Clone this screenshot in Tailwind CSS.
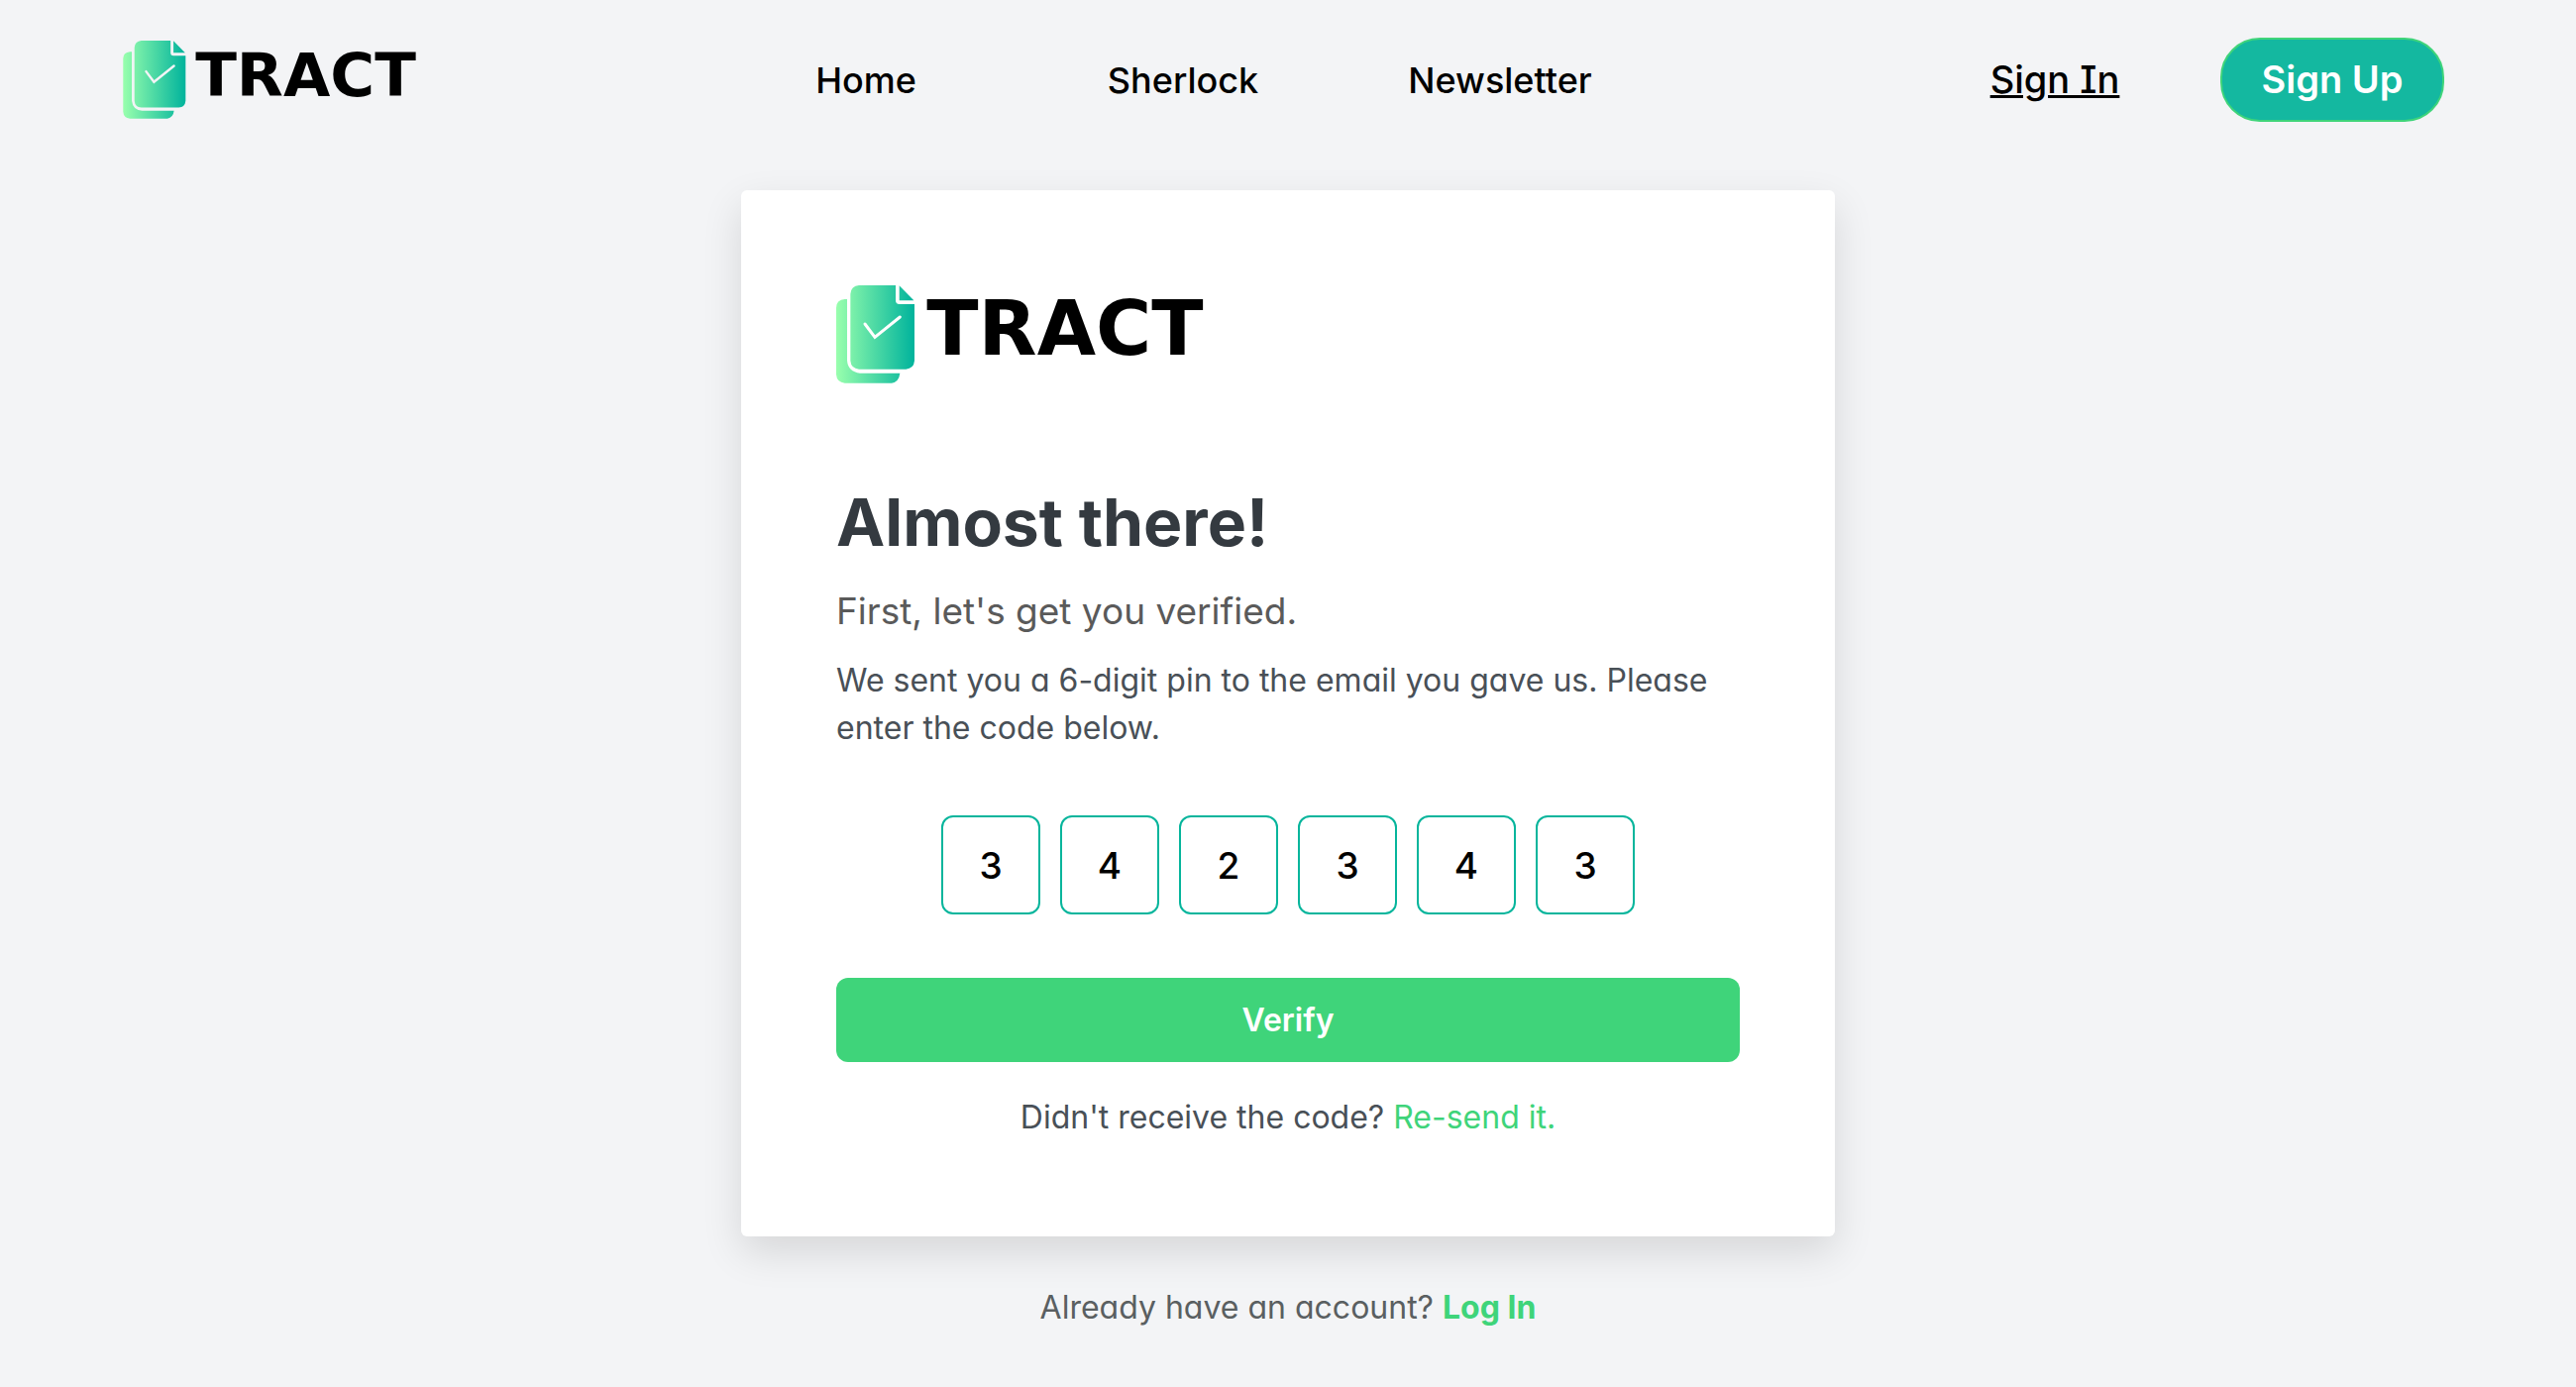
<!DOCTYPE html>
<html lang="en">
<head>
<meta charset="utf-8">
<meta name="viewport" content="width=device-width, initial-scale=1">
<title>Tract – Verify your email</title>
<script src="https://cdn.jsdelivr.net/npm/@tailwindcss/browser@4"></script>
</head>
<body class="min-h-screen bg-[#f3f4f6] font-['Inter',sans-serif] text-[32px] leading-[48px] [font-feature-settings:'cv11']">
  <header class="flex items-center justify-between pt-[38px] pr-[106px] pl-[124px] text-4xl font-medium text-black">
    <a href="#" aria-label="Tract" class="w-[330px]">
      <svg class="h-[79px] w-[299px]" viewBox="0 0 1122 297">
        <defs>
          <linearGradient id="leaf" gradientUnits="userSpaceOnUse" x1="0" y1="0" x2="237" y2="0">
            <stop offset="0" stop-color="#99ffad"/><stop offset="1" stop-color="#00b39c"/>
          </linearGradient>
        </defs>
        <g fill="url(#leaf)">
          <path d="M33 42H26Q0 44 0 68V270Q2 294 26 296H168Q190 292 193 266H72Q36 262 33 228Z"/>
          <path d="M69 0H180V46Q180 57 191 57H237V228Q235 252 211 254H69Q45 252 43 228V26Q45 2 69 0Z"/>
          <path d="M191 1V46H235Z"/>
        </g>
        <path d="M87 117L117 157L193 96" fill="none" stroke="#f3f4f6" stroke-width="9" stroke-linecap="round"/>
        <text x="274" y="210" class="fill-black font-['DejaVu_Sans',sans-serif] text-[230px] font-bold">TRACT</text>
      </svg>
    </a>
    <nav class="flex text-center">
      <a href="#" class="w-80">Home</a>
      <a href="#" class="w-80">Sherlock</a>
      <a href="#" class="w-80">Newsletter</a>
    </nav>
    <div class="grid w-[560px] grid-cols-2 items-center justify-items-center text-[38px] [font-feature-settings:'cv08']">
      <a href="#" class="underline">Sign In</a>
      <button type="button" class="h-[85px] w-[226px] rounded-[40px] border-2 border-[#3fd47a] bg-[#14b8a0] font-semibold text-white">Sign Up</button>
    </div>
  </header>

  <main class="mt-[69px] flex flex-col items-center pb-6">
    <section class="w-full max-w-[1104px] rounded-md bg-white p-24 text-[#495057] shadow-[0_16px_40px_rgba(0,0,0,0.12)]">
      <svg class="h-[99px] w-[374px]" viewBox="0 0 1122 297" role="img" aria-label="Tract">
        <g fill="url(#leaf)">
          <path d="M33 42H26Q0 44 0 68V270Q2 294 26 296H168Q190 292 193 266H72Q36 262 33 228Z"/>
          <path d="M69 0H180V46Q180 57 191 57H237V228Q235 252 211 254H69Q45 252 43 228V26Q45 2 69 0Z"/>
          <path d="M191 1V46H235Z"/>
        </g>
        <path d="M87 117L117 157L193 96" fill="none" stroke="#fff" stroke-width="9" stroke-linecap="round"/>
        <text x="274" y="210" class="fill-black font-['DejaVu_Sans',sans-serif] text-[230px] font-bold">TRACT</text>
      </svg>
      <h1 class="mt-[100px] text-[66px] leading-20 font-bold text-[#343a40]">Almost there!</h1>
      <h2 class="mt-[22px] text-[37px] leading-14 text-[#5a5a5a]">First, let's get you verified.</h2>
      <p class="mt-[18px]">We sent you a 6-digit pin to the email you gave us. Please enter the code below.</p>
      <form>
        <div class="mt-16 flex justify-center gap-5 text-[37px] font-medium text-black">
          <input aria-label="Digit 1" maxlength="1" value="3" class="size-[100px] rounded-xl border-2 border-[#06b59c] text-center">
          <input aria-label="Digit 2" maxlength="1" value="4" class="size-[100px] rounded-xl border-2 border-[#06b59c] text-center">
          <input aria-label="Digit 3" maxlength="1" value="2" class="size-[100px] rounded-xl border-2 border-[#06b59c] text-center">
          <input aria-label="Digit 4" maxlength="1" value="3" class="size-[100px] rounded-xl border-2 border-[#06b59c] text-center">
          <input aria-label="Digit 5" maxlength="1" value="4" class="size-[100px] rounded-xl border-2 border-[#06b59c] text-center">
          <input aria-label="Digit 6" maxlength="1" value="3" class="size-[100px] rounded-xl border-2 border-[#06b59c] text-center">
        </div>
        <button type="submit" class="mt-16 block h-[85px] w-full rounded-xl bg-[#3fd47a] font-semibold text-white">Verify</button>
      </form>
      <p class="mt-8 text-center">Didn't receive the code? <a href="#" class="text-[#3fd47a]">Re-send it.</a></p>
    </section>
    <p class="mt-12 text-[#5a5f61]">Already have an account? <a href="#" class="font-bold text-[#3fd47a]">Log In</a></p>
  </main>
</body>
</html>
